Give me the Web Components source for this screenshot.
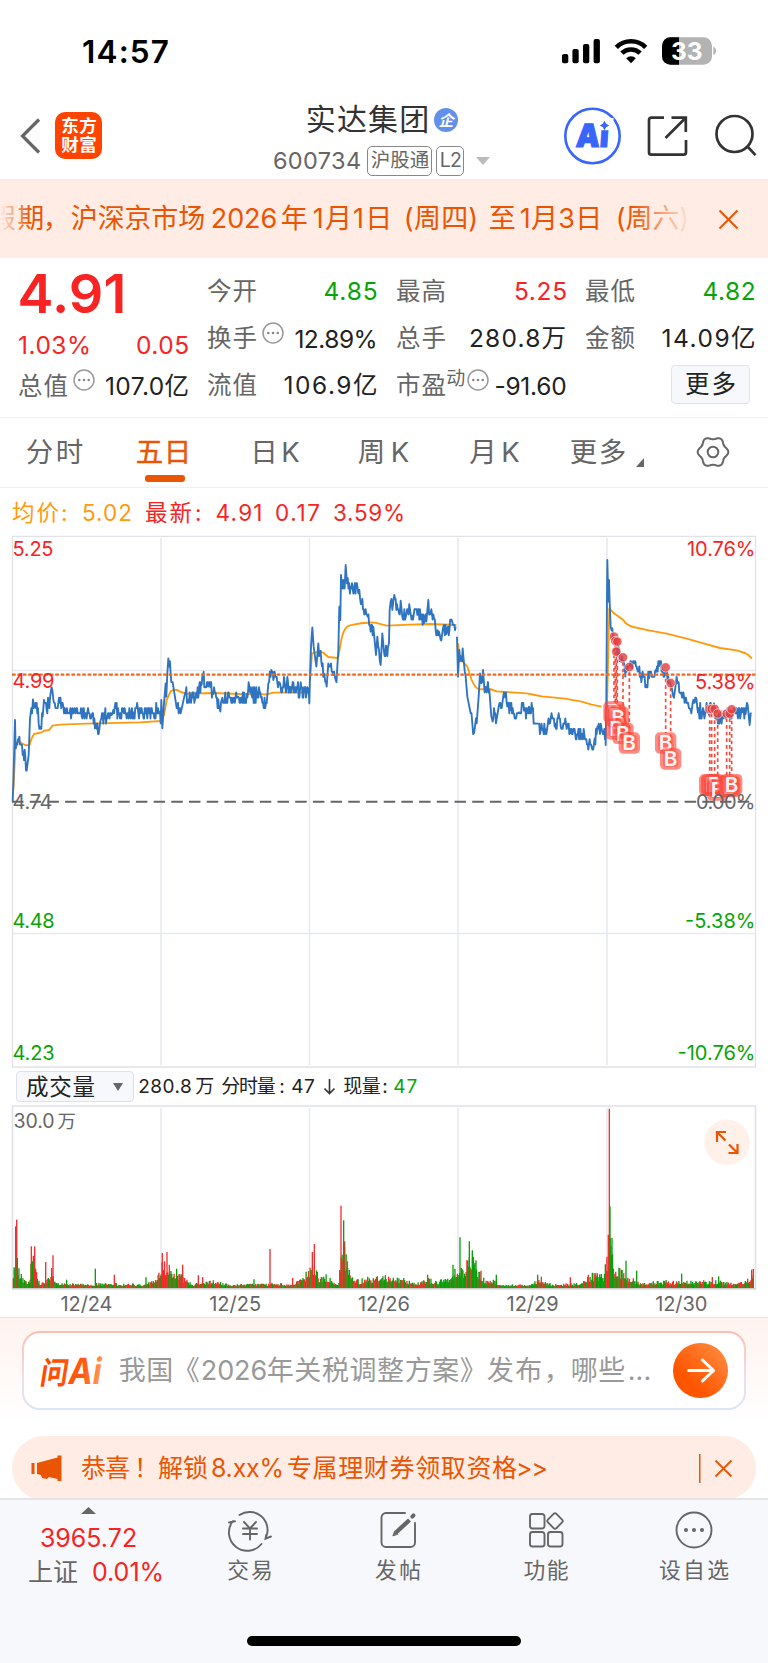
<!DOCTYPE html>
<html lang="zh-CN">
<head>
<meta charset="utf-8">
<title>实达集团 600734</title>
<style>
html,body{margin:0;background:#fff}
body{width:768px;height:1663px;overflow:hidden;font-family:Inter,"Noto Sans CJK SC",sans-serif;color:#333}
</style>
</head>
<body>
<stock-page></stock-page>
<script>
const RED='#f82323',GREEN='#07a407',ORANGE='#ea5504';

/* Text run that spreads its letters so the line fills a given width */
class FitText extends HTMLElement{
  connectedCallback(){
    if(this.shadowRoot)return;
    this.attachShadow({mode:'open'}).innerHTML=`<style>:host{display:block;flex:none;white-space:pre}span{display:inline-block;white-space:pre}</style><span><slot></slot></span>`;
    const w=+this.getAttribute('w'),s=this.shadowRoot.querySelector('span');
    const em=parseFloat(getComputedStyle(this).fontSize),n=[...this.textContent].length;
    const nat=s.getBoundingClientRect().width;
    this.style.width=w+'px';
    s.style.marginLeft=-em*.045+'px';
    if(n>1)s.style.letterSpacing=(w+em*.09-nat)/(n-1)+'px';
  }
}
/* items: [left, width, text, css]; left edges become margins in a flex row */
const run=(items,start=0)=>{let p=start;return items.map(([x,w,t,c=''])=>{const m=x-p;p=x+w;
  return t[0]==='<'?`<div style="flex:none;width:${w}px;margin-left:${m}px;${c}">${t}</div>`:`<fit-text w="${w}" style="margin-left:${m}px;${c}">${t}</fit-text>`}).join('')};
const define=(name,html)=>customElements.define(name,class extends HTMLElement{
  connectedCallback(){if(!this.shadowRoot)this.attachShadow({mode:'open'}).innerHTML=`<style>svg{display:block;overflow:visible}.row{display:flex;align-items:center}</style>`+(typeof html==='function'?html(this):html)}
});

define('status-bar',`<style>:host{display:block;height:102px;font-weight:600;color:#000}.row{height:102px;line-height:103px}</style>
<div class="row">${run([[83.500,84,'14:57','font-size:31.500px;padding-top:1px'],[562,154,`<svg width="154" height="102" viewBox="562 0 154 102">
<rect x="562" y="54" width="6.3" height="9.2" rx="2"/><rect x="572.4" y="49" width="6.3" height="14.2" rx="2"/><rect x="583" y="44" width="6.3" height="19.2" rx="2"/><rect x="593.6" y="39" width="6.3" height="24.2" rx="2"/>
<g fill="none" stroke="#000" stroke-width="4.6"><path d="M616.3 47.3a20.8 20.8 0 0 1 29.4 0"/><path d="M621.9 53.2a13 13 0 0 1 18.2 0"/></g><path d="M631 63.2l-4.8-5a6.9 6.9 0 0 1 9.6 0z"/>
<clipPath id="b"><rect x="662" y="37.3" width="50" height="27.4" rx="8.5"/></clipPath><g clip-path="url(#b)"><path fill="#b3b3b3" d="M662 37h50v28h-50z"/><path d="M662 37h17v28h-17z"/></g><path fill="#b3b3b3" d="M713.3 46.8c3.6 1 3.6 7.400 0 8.400z"/>
<text x="671" y="60" textLength="31.500" fill="#fff" font-family="Inter" font-weight="700" font-size="24.500">33</text></svg>`]])}</div>`);

define('page-header',`<style>:host{display:flex;height:78px;border-bottom:1.500px solid #ececee;box-sizing:border-box;padding-top:0}
.logo{margin:9.500px 0 0 13px;width:47px;height:47px;background:#ff4400;border-radius:10px;color:#fff;font-weight:700;font-size:17.500px;line-height:19.500px;padding:4px 0 4px 7px;box-sizing:border-box}
.mid{width:226px;margin-left:172px}.t{height:35px;line-height:35px;font-size:30px}.c{height:34px;margin-top:6.500px;font-size:23.500px;color:#666}
.bd{width:24px;height:24px;border-radius:50%;background:#6290ea;color:#fff;font:italic 700 15px/23px "Noto Sans CJK SC",sans-serif;text-align:center}
.tag{border:1.400px solid #888;border-radius:5px;box-sizing:border-box;height:30px;line-height:27px;font-size:19.500px;padding-left:3.500px}</style>
<svg width="42" height="76" viewBox="0 102 42 76" fill="none" stroke="#666" stroke-width="3.200"><path d="M39 119.500L22.500 136 39 152.500"/></svg>
<div class="logo"><fit-text w="34">东方</fit-text><fit-text w="34">财富</fit-text></div>
<div class="mid"><div class="row t">${run([[307,121,'实达集团'],[434,24,'<div class="bd">企</div>']],274)}</div>
<div class="row c">${run([[274,86,'600734'],[367,65,'<div class="tag"><fit-text w="57">沪股通</fit-text></div>'],[436,28,'<div class="tag"><fit-text w="20.500">L2</fit-text></div>'],[476,14,'<svg width="14" height="8"><path fill="#bbb" d="M0 0h14L7 8z"/></svg>']],274)}</div></div>
<svg width="210" height="76" viewBox="500 102 210 76" fill="none">
<circle cx="592.500" cy="136" r="27.200" stroke="#3865fb" stroke-width="2.600"/>
<g fill="#3865fb"><text transform="translate(575.500 146.500) skewX(-4)" font-family="Inter" font-weight="900" font-size="32" stroke="#3865fb" stroke-width="1.200" textLength="32.500" lengthAdjust="spacingAndGlyphs">Ai</text><path fill="#fff" d="M597.500 118h16v12.200h-16z"/><path d="M604.500 121.500l1.300 2.700 2.700 1.300-2.700 1.300-1.300 2.700-1.300-2.700-2.700-1.300 2.700-1.300z" stroke="#3865fb"/></g>
<g stroke="#333" stroke-width="2.700"><path d="M664 117.700h-12.500a2.500 2.500 0 0 0-2.500 2.500v32a2.500 2.500 0 0 0 2.500 2.500H683.500a2.500 2.500 0 0 0 2.500-2.500V140"/><path d="M671.500 117.700H685.800V132M685.500 118L665.500 138"/>
<circle cx="734.500" cy="134" r="18"/><path d="M747 146l8.500 9.200"/></g></svg>`);

define('notice-banner',`<style>:host{display:block;height:78px;background:#ffede5;color:${ORANGE};overflow:hidden}.w{position:relative}.row{height:78px;line-height:78px;font-size:27px}
.f{position:absolute;inset:0;background:linear-gradient(90deg,#ffede5 0,#ffede500 30px,#ffede500 632px,#ffede5 692px,#ffede500 693px)}</style>
<div class="w"><div class="row">${run([[-10,53,'假期'],[44,7,'<fit-text w="7">，</fit-text>'],[72,132,'沪深京市场'],[212,64,'2026'],[282,25,'年'],[314,77,'1月1日'],[405,72,'(周四)'],[490,24,'至'],[521,80,'1月3日'],[617,71,'(周六)'],[719,19,'<svg width="19" height="19" fill="none" stroke="#ea5504" stroke-width="2"><path d="M.500.500l18 18M18.500.500L.500 18.500"/></svg>']])}</div><div class="f"></div></div>`);

const dots='<svg width="22" height="22" fill="none" stroke="#999" stroke-width="1.500"><circle cx="11" cy="11" r="10"/><g fill="#888" stroke="none"><circle cx="6.300" cy="11" r="1.300"/><circle cx="11" cy="11" r="1.300"/><circle cx="15.700" cy="11" r="1.300"/></g></svg>';
const V='color:#222;';
define('quote-panel',`<style>:host{display:grid;grid-template-columns:198px 1fr;height:160px;border-bottom:1.500px solid #f0f0f2;box-sizing:border-box;font-size:24.500px;color:#666;padding-top:8px}
.r{height:47.300px;line-height:47.300px}.right{padding-top:1.500px}.btn{box-sizing:border-box;height:39px;line-height:36px;width:79px;border:1.500px solid #e0e2e8;border-radius:4px;background:#f7f8fb;padding-left:14px;color:#222}</style>
<div><div class="row" style="height:56px;line-height:56px;font-size:54px;font-weight:600;color:${RED}">${run([[20,104,'4.91']])}</div>
<div class="row" style="height:46px;line-height:46px;color:${RED}">${run([[19,71,'1.03%'],[137,51,'0.05']])}</div>
<div class="row" style="height:36px;line-height:36px">${run([[19,48,'总值'],[73,22,dots,'margin-top:-12px;'],[106,82,'107.0亿',V]])}</div></div>
<div class="right"><div class="row r">${run([[208,48,'今开'],[324.500,52,'4.85','color:'+GREEN],[397,48,'最高'],[515,51,'5.25','color:'+RED],[586,48,'最低'],[703.500,51,'4.82','color:'+GREEN]],198)}</div>
<div class="row r">${run([[208,48,'换手'],[262,22,dots,'margin-top:-11px;'],[295.500,81,'12.89%',V+'padding-top:2px;'],[397,48,'总手'],[470,95,'280.8万',V],[586,48,'金额'],[662.500,92,'14.09亿',V]],198)}</div>
<div class="row r">${run([[208,48,'流值'],[284.500,92,'106.9亿',V],[397,48,'市盈'],[447,18,'<fit-text w="18" style="font-size:19px;margin-top:-15px">动</fit-text>'],[467,22,dots,'margin-top:-11px;'],[495.500,70,'-91.60',V+'padding-top:2px;'],[671,79,'<div class="btn"><fit-text w="49">更多</fit-text></div>','margin-top:-3px;']],198)}</div></div>`);

let gear='';for(let i=0;i<=120;i++){const a=i*Math.PI/60,r=14+1.300*Math.cos(6*a);gear+=(i?'L':'M')+(17+r*Math.cos(a)).toFixed(2)+' '+(17+r*Math.sin(a)).toFixed(2)}
define('period-tabs',`<style>:host{display:block;height:70px;border-bottom:1.500px solid #f0f0f2;box-sizing:border-box;font-size:27.500px;color:#666}.row{height:68px;line-height:69px}.on{position:relative}.on i{position:absolute;left:8px;bottom:5px;width:40px;height:6.500px;border-radius:3px;background:${ORANGE}}</style>
<div class="row">${run([[27,55,'分时'],[137,53,'<div class="on"><fit-text w="53">五日</fit-text><i></i></div>',`color:${ORANGE};-webkit-text-stroke:.4px ${ORANGE};`],[251.500,47,'日K'],[359,49,'周K'],[470.500,48,'月K'],[571,54,'更多'],[636,8,'<svg width="8" height="9" style="margin-top:20px"><path fill="#666" d="M8 0v9H0z"/></svg>'],[696,34,`<svg width="34" height="34" fill="none" stroke="#666" stroke-width="2"><path d="${gear}z"/><circle cx="17" cy="17" r="5.300"/></svg>`]])}</div>`);

define('chart-legend',`<style>:host{display:block;height:48px;font-size:22.500px;color:${RED}}.row{height:48px;line-height:49px}</style>
<div class="row">${run([[13,45,'均价','color:#ff9a0e'],[62,6,':','color:#ff9a0e'],[83,48,'5.02','color:#ff9a0e'],[146,45,'最新'],[196,6,':'],[216.500,45,'4.91'],[276,43,'0.17'],[334,70,'3.59%']])}</div>`);

/* deterministic noise */
let seed=7;const rnd=()=>{seed=(seed*1103515245+12345)&0x7fffffff;return seed/0x7fffffff};
const parse=s=>s.trim().split(/\s+/).map(p=>p.split(',').map(Number));
/* price path: key points joined with tick-sized jitter, x in thirds of a pixel */
const priceLine=(s,ox=0)=>{const k=parse(s);let d='',T=15.600;k.forEach(([x,y],i)=>{
  d+=(i?'L':'M')+(x+ox)+' '+y;const n=k[i+1];if(!n)return;const steps=Math.floor((n[0]-x)/1.900);if(steps<2||Math.abs(n[1]-y)>46)return;
  for(let j=1;j<steps;j++){const f=j/steps,yy=y+(n[1]-y)*f+(rnd()-.5)*46;const q=Math.round((yy-815)/T)*T+815;d+='L'+(x+ox+(n[0]-x)*f).toFixed(1)+' '+q.toFixed(1)}});return d};
const A=priceLine(`38,815 40,760 45,570 47,655 50,640 58,620 66,645 70,665 76,680 80,722 86,675 90,565 96,550 99,508 104,530 112,550 122,590 128,560 132,510 140,540 146,520 150,505 157,480 160,508 175,520 190,530 205,548 225,542 245,558 262,547 275,555 285,595 292,580 296,612 302,570 320,560 335,555 340,540 370,543 400,547 440,545 480,545 482,580 484,510 487,595 492,520 497,460 499,500 502,430 505,385 512,430 520,470 528,520 542,550 555,490 565,510 585,508 597,475 605,465 609,435 615,470 625,470 640,492 655,508 661,545 665,510 680,512 700,505 715,500 740,492 748,470 755,496 785,500 800,520 805,460 814,420 820,450 840,460 870,470 900,480 920,488 926,475 928,520 930,440 933,350 937,292 941,350 949,410 955,340 960,370 968,400 972,430 980,470 985,400 993,400 1000,435 1007,450 1012,410 1015,360 1018,230 1021,270 1023,135 1030,150 1034,175 1037,105 1041,160 1052,170 1058,175 1075,190 1078,180 1085,220 1095,250 1103,260 1112,305 1120,290 1128,375 1132,320 1137,360 1142,405 1147,310 1152,365 1160,365 1164,350 1167,340 1169,240 1172,215 1177,240 1183,195 1189,240 1197,250 1202,212 1207,260 1217,262 1230,240 1237,258 1252,255 1262,262 1272,280 1279,275 1285,210 1292,250 1302,265 1307,300 1317,305 1322,330 1330,290 1339,312 1344,290 1357,276 1367,290`);
const B=priceLine(`219,320 222,440 226,360 232,385 236,355 240,400 245,440 250,500 260,550 265,580 270,610 278,580 284,500 288,430 292,460 297,420 300,460 310,470 316,480 322,560 326,575 332,550 336,580 345,525 355,520 362,495 370,530 380,540 390,550 405,547 420,542 430,535 435,530 445,540 455,580 470,600 475,600 485,598 498,580 505,565 512,590 522,565 530,588 540,580 550,590 560,610 595,612 605,628 615,640 623,650 632,625 640,590 648,612 655,605 665,610 665,645 667,510 669,200 670,90 673,215 675,150 677,215 680,290 685,295 690,330 697,360 705,380 712,395 720,400 724,440 730,420 737,410 745,415 752,400 760,420 770,430 780,440 786,465 795,445 805,440 815,420 825,408 835,418 845,435 855,460 863,470 868,500 880,460 890,490 900,500 910,520 917,535 920,540 928,510 938,510 942,548 955,545 970,548 975,555 978,520 985,540 990,520 998,560 1008,570 1015,558 1020,550 1028,545 1033,560 1045,547 1060,550 1075,547 1085,552 1091,525 1097,585 1100,550 1103,550`,1152);
const dotsAt=parse('690,320 694,333 700,335 697,365 717,382 736,411 845,412 860,459 977,537 983,537 992,537 1001,551 1028,551 1037,551 1043,538');
const tags=parse('690,546 694,556 703,563 697,597 717,610 736,639 845,639 860,687 977,765 983,765 992,765 1001,780 1032,768 1037,770 1043,764');
const lab=(x,y,w,t,c)=>`<text x="${x}" y="${y}" textLength="${w}" fill="${c}">${t}</text>`;
define('price-chart',`<style>:host{display:block;height:531px}</style>
<svg width="768" height="531" viewBox="0 536 768 531" fill="none" font-family="Inter" font-size="20">
<path d="M12.500 1067V536.300H755.500V1067z" stroke="#e0e2e8" stroke-width="1.300"/>
<path d="M161 538V1065M309.500 538V1065M458 538V1065M607 538V1065M13 670.500H755M13 933.500H755" stroke="#e6e9f0" stroke-width="1.500"/>
${lab(12.500,555.500,41,'5.25',RED)}${lab(687,555.500,68.500,'10.76%',RED)}
<g transform="translate(0 530) scale(.33333)" stroke-width="5.600" stroke-linejoin="round">
<g stroke="#ff9a0e"><path d="M40 780L46 660Q50 630 60 637L75 645 88 646 95 625 102 612 125 607 133 602 148 600 157 587 180 584 260 581 420 577 482 573L492 555 500 510 512 484Q525 474 542 486L560 491 640 489 720 492 800 493 820 488 924 487"/><path d="M930 450L936 370Q955 363 968 367L985 381 1014 384 1022 340Q1030 290 1050 286 1090 276 1125 278L1160 287 1230 284 1290 282 1369 285"/><path d="M1374 340L1380 385Q1395 402 1402 410L1415 450Q1425 474 1437 478L1470 477 1490 484 1580 490 1605 495 1625 499 1695 506 1745 515 1775 524 1805 530M1821 530L1828 235 1842 250 1870 270Q1878 285 1900 291L1950 302 2000 311 2060 326 2110 340 2160 354 2210 361 2235 369 2245 375 2256 386"/></g>
<g stroke="#2f74c0"><path d="${A}"/><path d="${B}"/></g></g>
<path d="M12 674.600H755.500" stroke="#f0691e" stroke-width="2.200" stroke-dasharray="3.700 1.700"/>
<path d="M12 801.700H755" stroke="#666" stroke-width="2" stroke-dasharray="11.500 6.200"/>
${lab(12.500,687.500,42,'4.99',RED)}${lab(12.500,808.500,40,'4.74','#666')}${lab(12.500,928,42,'4.48',GREEN)}${lab(12.500,1060,42,'4.23',GREEN)}
${lab(695,688.500,60.500,'5.38%',RED)}${lab(685,928,70.500,'-5.38%',GREEN)}${lab(677.500,1060,78,'-10.76%',GREEN)}
<g transform="translate(384 530) scale(.33333)">
<path stroke="#f5493c" stroke-width="5" stroke-dasharray="11 9" d="${dotsAt.map(([x,y],i)=>`M${x} ${y+14}V${tags[i][1]-30}`).join('')}"/>
${dotsAt.map(([x,y])=>`<circle cx="${x}" cy="${y}" r="14" fill="#e84040" fill-opacity=".82" stroke="#fff" stroke-opacity=".7" stroke-width="2.500"/>`).join('')}
${tags.map(([x,y])=>`<rect x="${x-32}" y="${y-32}" width="64" height="64" rx="14" fill="#ff4436" fill-opacity=".62"/><rect x="${x-24.500}" y="${y-24.500}" width="49" height="49" rx="9" fill="#ff4436" fill-opacity=".42" stroke="#fff" stroke-opacity=".18" stroke-width="2"/><text x="${x-21}" y="${y+22}" font-size="62" font-weight="600" fill="#fff" fill-opacity=".95">B</text>`).join('')}</g>
${lab(696,808.500,59.500,'0.00%','#666')}
</svg>`);

define('volume-toolbar',`<style>:host{display:block;height:39px;font-size:19px;color:#222}.row{height:39px;line-height:40px}.sel{display:flex;align-items:center;box-sizing:border-box;height:31px;line-height:30px;border:1.500px solid #dfe1e7;border-radius:4px;background:#f7f8fb;font-size:22.500px;padding-left:10px}</style>
<div class="row">${run([[16,117.500,'<div class="sel"><fit-text w="67">成交量</fit-text><svg width="10" height="8" style="margin-left:19px"><path fill="#666" d="M0 0h10L5 8z"/></svg></div>'],[139,52,'280.8'],[196,17,'万'],[222,53,'分时量'],[280,4,':'],[292,22,'47'],[323,13,'<svg width="13" height="16" fill="none" stroke="#333" stroke-width="1.600"><path d="M6.500 0v15M1.500 9.500l5 5 5-5"/></svg>'],[344,36,'现量'],[383,4,':'],[394,22.500,'47','color:'+GREEN]])}</div>`);

const env=parse(`40,60 47,100 55,60 75,20 90,20 94,100 104,90 115,25 130,15 160,40 170,15 200,12 300,14 430,12 465,25 478,55 490,80 510,78 520,45 550,35 580,12 640,22 690,10 780,14 880,12 910,30 925,60 940,70 955,38 985,38 1000,15 1017,15 1022,110 1033,130 1045,60 1060,35 1080,22 1100,40 1120,28 1150,45 1172,30 1212,30 1242,15 1282,30 1312,20 1352,35 1372,75 1392,60 1412,110 1427,75 1452,28 1482,25 1502,10 1592,12 1622,30 1652,12 1742,14 1772,40 1812,42 1824,110 1832,150 1842,70 1872,50 1892,32 1922,15 2002,22 2052,20 2112,22 2162,22 2212,12 2242,28 2262,56`);
const envAt=x=>{for(let i=1;i<env.length;i++)if(x<=env[i][0]){const[a,b]=env[i-1],[c,e]=env[i];return b+(e-b)*(x-a)/(c-a)}return 50};
let bars='';const bar=(x,h,c)=>`<path stroke="${c}" d="M${x} 714v-${h}"/>`;
for(let x=40;x<2262;x+=2.400){const h=envAt(x)*(.45+.65*rnd()**1.300);bars+=bar(x.toFixed(1),h.toFixed(0),rnd()>.42?'#0a9f0a':'#f62c2c')}
const spikes={r:'47,185 50,205 94,125 104,125 137,78 155,60 159,98 343,40 487,105 501,108 548,70 595,38 608,33 810,117 878,30 937,108 943,132 1023,247 1034,140 1042,80 1283,40 1443,52 1624,34 1711,32 1765,40 1828,538 1825,160 2137,33 2255,55 2260,57',g:'52,90 97,80 200,25 286,58 438,32 530,58 762,26 1031,203 1380,152 1408,140 1417,113 1428,83 1359,70 1489,40 1613,40 1777,46 1830,245 1836,150 1878,82 1910,52 2045,43 2156,35'};
const sp=(k,c)=>parse(spikes[k]).map(([x,h])=>bar(x,h,c)).join('');
define('volume-chart',`<style>:host{display:block;height:211px}</style>
<svg width="768" height="211" viewBox="0 1106 768 211" fill="none" font-family='Inter,"Noto Sans CJK SC",sans-serif' font-size="20">
<path d="M12.500 1106V1289M755.500 1106V1289M12 1106H756" stroke="#dfe1e7" stroke-width="1.600"/>
<path d="M161 1108V1288M309.500 1108V1288M458 1108V1288M607 1108V1288" stroke="#e6e9f0" stroke-width="1.500"/>
<g transform="translate(0 1050) scale(.33333)" stroke-width="4">${bars}${sp('r','#f62c2c')}${sp('g','#0a9f0a')}</g>
<path d="M12 1288.800H756" stroke="#ccc" stroke-width="1.500"/>
<g fill="#666"><text x="13.500" y="1128" textLength="41" font-size="19.500">30.0</text><text x="57.500" y="1128" font-size="18.500">万</text>
${['12/24','12/25','12/26','12/29','12/30'].map((t,i)=>`<text x="${60.500+148.700*i}" y="1311" textLength="52">${t}</text>`).join('')}</g>
<circle cx="727" cy="1142.300" r="22.700" fill="#fff1ea"/><path stroke="${ORANGE}" stroke-width="2.200" d="M717 1142v-10h9M717 1132l8.500 8.500M729 1144.500l8.500 8.500M728.500 1153h9v-9"/></svg>`);

define('ai-ask',`<style>:host{display:block;height:119px;border-top:1.500px solid #e4e4ea;box-sizing:border-box;background:linear-gradient(#fff3ef,#fff 105px);padding:13px 22px 0}
.card{box-sizing:border-box;width:724px;height:79px;border:2px solid transparent;border-radius:18px;background:linear-gradient(#fff,#fff) padding-box,linear-gradient(#ffbdb3,#ecdfea 60%,#dbe5f8) border-box;line-height:77px;font-size:27px;color:#999}</style>
<div class="row card">${run([[39,66,`<svg width="66" height="36" viewBox="0 0 66 36"><defs><linearGradient id="g" x1="0" x2="1"><stop stop-color="#ff4a00"/><stop offset=".7" stop-color="#ff5a14"/><stop offset="1" stop-color="#ff9c58"/></linearGradient></defs><text transform="translate(0 31) skewX(-9)" fill="url(#g)" font-family='Inter,"Noto Sans CJK SC",sans-serif' font-weight="700" font-size="36" textLength="61" lengthAdjust="spacingAndGlyphs"><tspan font-size="31">问</tspan>Ai</text></svg>`],
[120,52,'我国'],[187,13,'<fit-text w="27" style="margin-left:-13px">《</fit-text>'],[202,64,'2026'],[268,190,'年关税调整方案'],[461,14,'》'],[488,53,'发布'],[545,7,'，'],[572,52,'哪些'],[629,21,'...'],
[673,55,'<svg width="55" height="55"><defs><linearGradient id="o" x1="0" y1="1" x2="1" y2="0"><stop offset=".3" stop-color="#ff5500"/><stop offset="1" stop-color="#ff9248"/></linearGradient></defs><circle cx="27.500" cy="27.500" r="27.500" fill="url(#o)"/><path fill="none" stroke="#fff" stroke-width="3" stroke-linecap="round" stroke-linejoin="round" d="M15.500 27.500h25M29.500 17l11 10.500-11 10.500"/></svg>']],24)}</div>`);

define('promo-pill',`<style>:host{display:block;height:62px;overflow:hidden}.row{margin:0 12px;height:64px;line-height:66px;border-radius:32px;background:#ffede5;color:${ORANGE};font-size:25px}</style>
<div class="row">${run([[31,31,'<svg width="31" height="27" fill="#ea5504"><path d="M.500 8h3v11h-3zM6 8L26.500 2.500V.500H30.500V26h-4v-2L18 22l-2 2-5-1-1-3-4-1z"/></svg>'],[82,47,'恭喜'],[135,5,'！'],[159,48,'解锁'],[212,71,'8.xx%'],[288,228,'专属理财券领取资格'],[517,30,'&gt;&gt;'],[699,2,'<svg width="2" height="29"><path fill="#ea5504" d="M0 0h1.500v29H0z"/></svg>'],[715,17,'<svg width="17" height="17" fill="none" stroke="#ea5504" stroke-width="1.800"><path d="M.500.500l16 16M16.500.500l-16 16"/></svg>']],12)}</div>`);

const icon=p=>`<svg width="44" height="42" viewBox="-22 -22 44 42" fill="none" stroke="#666" stroke-width="1.900" stroke-linecap="round">${p}</svg>`;
define('tab-item',h=>`<style>:host{display:block;width:148px;margin-top:8px;color:#666;font-size:21.800px;line-height:40px}fit-text{margin:0 auto}</style><slot></slot><fit-text w="${h.getAttribute('w')}">${h.getAttribute('label')}</fit-text>`);
define('bottom-bar',`<style>:host{display:block;box-sizing:border-box;height:165px;border-top:2px solid #e5e5e9;background:#f7f8fb}.top{display:flex;height:136px}.idx{width:176px;color:${RED};font-size:25px}.row{height:34px;line-height:34px}.home{width:274px;height:10px;border-radius:5px;background:#000;margin:0 auto 0 247px}tab-item svg{margin:0 auto}</style>
<div class="top"><div class="idx"><svg width="15" height="7" style="margin:7px 0 0 81px"><path fill="#666" d="M0 7h15L7.500 0z"/></svg><div class="row" style="margin-top:6.500px">${run([[41,95,'3965.72']])}</div><div class="row" style="height:35px;line-height:35px">${run([[29,48,'上证','color:#666'],[93,70,'0.01%']])}</div></div>
<tab-item w="43.500" label="交易">${icon('<path d="M-10.500-15A18 18 0 0 1 16.500 6M11.500 14A18 18 0 0 1-17-9M-21-7.500l6-1.200M21 6.500l-5.500 2.200.800-4" /><path d="M-6-8L0-1.500 6-8M0-1.500V9.500M-7-1.500H7M-7 4H7"/>')}</tab-item>
<tab-item w="44" label="发帖">${icon('<path d="M7-17H-12A4.500 4.500 0 0 0-16.500-12.500V12.500A4.500 4.500 0 0 0-12 17H12.500A4.500 4.500 0 0 0 17 12.500V-7"/><path stroke-width="4.300" stroke-linecap="butt" d="M-2 2.500L11.500-10"/><path fill="#666" stroke-width="1" d="M-5 5.500l1.800-4.500 2.700 3z"/><path stroke-width="4" d="M14.300-13.400l1.200-1.200"/>')}</tab-item>
<tab-item w="43" label="功能">${icon('<rect x="-16" y="-16" width="14.500" height="14.500" rx="2.500"/><rect x="-16" y="2" width="14.500" height="14.500" rx="2.500"/><rect x="2" y="2" width="14.500" height="14.500" rx="2.500"/><rect x="3" y="-15" width="12" height="12" rx="2" transform="rotate(45 9 -9)"/>')}</tab-item>
<tab-item w="68" label="设自选">${icon('<circle r="17.500"/><g fill="#666" stroke="none"><circle cx="-8" r="2"/><circle r="2"/><circle cx="8" r="2"/></g>')}</tab-item></div>
<div class="home"></div>`);

define('stock-page',`<style>:host{display:flex;flex-direction:column;width:768px;height:1663px;background:#fff}:host>*{flex:none}</style>
<status-bar></status-bar><page-header></page-header><notice-banner></notice-banner><quote-panel></quote-panel><period-tabs></period-tabs><chart-legend></chart-legend><price-chart></price-chart><volume-toolbar></volume-toolbar><volume-chart></volume-chart><ai-ask></ai-ask><promo-pill></promo-pill><bottom-bar></bottom-bar>`);
customElements.define('fit-text',FitText);
</script>
</body>
</html>
